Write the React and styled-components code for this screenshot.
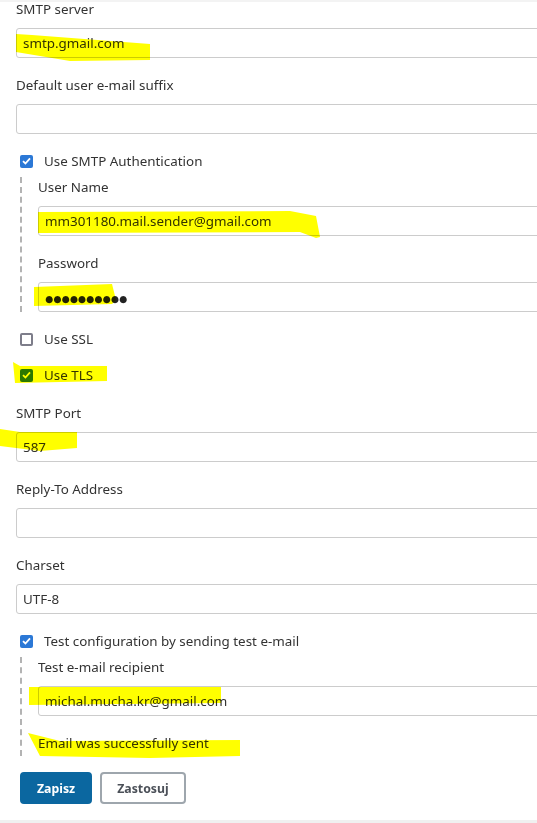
import React from "react";
import styled, { createGlobalStyle } from "styled-components";

const GlobalStyle = createGlobalStyle`
  html, body {
    margin: 0;
    padding: 0;
    background: #fff;
    overflow: hidden;
  }
  body {
    font-family: "Noto Sans", "Open Sans", sans-serif;
    font-size: 13.4px;
    color: #333;
  }
`;

const Page = styled.div`
  position: relative;
  width: 537px;
  height: 823px;
  overflow: hidden;
  border-top: 2px solid #f3f3f3;
  box-sizing: border-box;
`;

const Form = styled.div`
  display: flex;
  flex-direction: column;
  padding-left: 16px;
  margin-top: -3px;
`;

const Group = styled.div`
  display: flex;
  flex-direction: column;
  margin-bottom: ${p => p.$gap ?? 17}px;
`;

const Label = styled.div`
  height: 20px;
  line-height: 20px;
  margin-bottom: 9px;
  white-space: nowrap;
`;

const Field = styled.div`
  box-sizing: border-box;
  width: 560px;
  height: 30px;
  border: 1px solid #ccc;
  border-radius: 3px;
  padding: 0 6px;
  line-height: 28px;
  color: #333;
  white-space: nowrap;
`;

const Dots = styled.span`
  font-family: "DejaVu Sans", sans-serif;
  font-size: 9.2px;
  letter-spacing: 0.2px;
  color: #222;
`;

const CheckRow = styled.label`
  display: flex;
  align-items: center;
  height: 20px;
  margin-left: 4px;
  margin-bottom: ${p => p.$gap ?? 17}px;
`;

const Box = styled.span`
  box-sizing: border-box;
  width: 13px;
  height: 13px;
  border-radius: 2px;
  margin-right: 11px;
  display: flex;
  align-items: center;
  justify-content: center;
  background: ${p => (p.$checked ? "#2b78d6" : "#fff")};
  border: ${p => (p.$checked ? "none" : "2px solid #7d7d8a")};
`;

const Nested = styled.div`
  display: flex;
  flex-direction: column;
  margin: 6px 0 17px 4px;
  padding-left: 16px;
  border-left: 2px dashed #b3b3b3;
`;

const Message = styled.div`
  height: 20px;
  line-height: 20px;
  margin-bottom: 3px;
`;

const Buttons = styled.div`
  display: flex;
  gap: 8px;
  margin: -1px 0 0 4px;
`;

const Button = styled.button`
  box-sizing: border-box;
  height: 32px;
  padding: 0 15px;
  border-radius: 4px;
  font-family: "Noto Sans", sans-serif;
  font-size: 12.3px;
  font-weight: 700;
  cursor: pointer;
  background: ${p => (p.$primary ? "#0b67a0" : "#fff")};
  color: ${p => (p.$primary ? "#fff" : "#4b5058")};
  border: 2px solid ${p => (p.$primary ? "#0b67a0" : "#9ea6ad")};
`;

const BottomStrip = styled.div`
  position: absolute;
  left: 0;
  right: 0;
  bottom: 0;
  height: 3px;
  background: #f0f0f0;
`;

const Marker = styled.svg`
  position: absolute;
  left: 0;
  top: -2px;
  pointer-events: none;
  mix-blend-mode: multiply;
`;

const Check = () => (
  <svg width="9" height="8" viewBox="0 0 9 8">
    <path d="M1 4.2 L3.4 6.5 L8 1.3" fill="none" stroke="#fff" strokeWidth="1.8" />
  </svg>
);

const CheckBox = ({ checked, gap, children }) => (
  <CheckRow $gap={gap}>
    <Box $checked={checked}>{checked && <Check />}</Box>
    {children}
  </CheckRow>
);

const Input = ({ label, gap, children }) => (
  <Group $gap={gap}>
    <Label>{label}</Label>
    <Field>{children}</Field>
  </Group>
);

// yellow marker strokes drawn over the screenshot
const marks = [
  "M16,34 L32,35 L150,44 L150,60 L70,61 L16,52 Z",
  "M38,212 L290,211 L316,216 L320,237 L316,238 L300,232 L38,233 Z",
  "M34,287 L112,284 L116,300 L112,304 L34,306 Z",
  "M13,362 L20,366 L107,366 L107,381 L15,383 Z",
  "M0,429 L20,432 L77,432 L77,448 L40,451 L0,446 Z",
  "M29,687 L221,687 L221,703 L29,705 Z",
  "M28,733 L60,741 L240,740 L240,756 L150,758 L40,756 Z",
];

export default function App() {
  return (
    <Page>
      <GlobalStyle />
      <Form>
        <Input label="SMTP server">smtp.gmail.com</Input>
        <Input label="Default user e-mail suffix" />
        <CheckBox checked gap={0}>Use SMTP Authentication</CheckBox>
        <Nested>
          <Input label="User Name">mm301180.mail.sender@gmail.com</Input>
          <Input label="Password" gap={0}>
            <Dots>●●●●●●●●●●</Dots>
          </Input>
        </Nested>
        <CheckBox gap={16}>Use SSL</CheckBox>
        <CheckBox checked gap={18}>Use TLS</CheckBox>
        <Input label="SMTP Port">587</Input>
        <Input label="Reply-To Address" />
        <Input label="Charset">UTF-8</Input>
        <CheckBox checked gap={0}>Test configuration by sending test e-mail</CheckBox>
        <Nested>
          <Input label="Test e-mail recipient">michal.mucha.kr@gmail.com</Input>
          <Message>Email was successfully sent</Message>
        </Nested>
        <Buttons>
          <Button $primary>Zapisz</Button>
          <Button>Zastosuj</Button>
        </Buttons>
      </Form>
      <Marker width="537" height="823">
        {marks.map((d, i) => (
          <path key={i} d={d} fill="#ffff00" />
        ))}
      </Marker>
      <BottomStrip />
    </Page>
  );
}
